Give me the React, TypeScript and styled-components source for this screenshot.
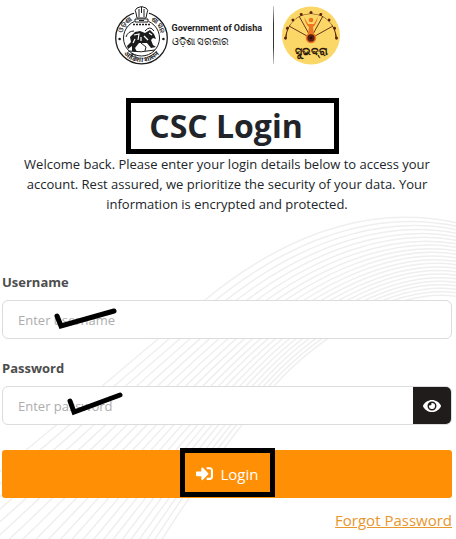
import React from "react";
import styled, { createGlobalStyle } from "styled-components";
import { FaEye, FaSignInAlt } from "react-icons/fa";

const GlobalStyle = createGlobalStyle`
  *, *::before, *::after { box-sizing: border-box; }
  body { margin: 0; background: #fff; color: #212529; font-family: "Open Sans", "Noto Sans", sans-serif; }
`;

const Page = styled.main`
  position: relative;
  isolation: isolate;
  min-height: 100vh;
  overflow: hidden;
  padding: 4px 4px 8px 2px;
`;

const Waves = styled.svg`
  position: absolute;
  z-index: -1;
  top: 0;
  right: 0;
`;

const Brand = styled.header`
  display: flex;
  justify-content: center;
  align-items: center;
  height: 62px;
`;

const BrandText = styled.div`
  min-width: 94px;
  margin-left: 3px;
  font: 500 10px/13px Roboto, sans-serif;
  color: #222;
  white-space: nowrap;
`;

const BrandName = styled.div`
  font-size: 9px;
  font-weight: 700;
`;

const Divider = styled.span`
  width: 1px;
  height: 58px;
  margin: 0 7px;
  background: linear-gradient(#ccc, #333 30%, #333 70%, #ccc);
`;

const Intro = styled.section`
  display: flex;
  flex-direction: column;
  align-items: center;
  margin-top: 32px;
  text-align: center;
`;

const Title = styled.h1`
  margin: 0 0 0 10px;
  width: 213px;
  padding-right: 12px;
  border: 5px solid #000;
  font-size: 32px;
  line-height: 46px;
  font-weight: 700;
`;

const Lead = styled.p`
  margin: 0;
  padding: 0 16px;
  font-size: 13px;
  line-height: 20px;
`;

const Form = styled.form`
  display: flex;
  flex-direction: column;
  margin-top: 58px;
`;

const Field = styled.div`
  display: flex;
  flex-direction: column;
  gap: 8px;
  margin-bottom: 19px;
`;

const Label = styled.label`
  font-size: 13px;
  line-height: 20px;
  font-weight: 700;
  color: #4d4d4d;
`;

const InputGroup = styled.div`
  position: relative;
  display: flex;
  height: 39px;
  border: 1px solid #dcdcdc;
  border-radius: 6px;
  background: #fff;
  overflow: hidden;
`;

const Input = styled.input`
  flex: 1;
  min-width: 0;
  padding: 0 15px;
  border: 0;
  outline: 0;
  background: transparent;
  font: 13px "Open Sans", sans-serif;
  &::placeholder { color: #adadad; opacity: 1; }
`;

const RevealButton = styled.button`
  display: grid;
  place-items: center;
  width: 38px;
  padding: 0;
  border: 0;
  background: #1f1c1b;
  color: #fff;
`;

const Tick = styled.svg<{ $left: number }>`
  position: absolute;
  left: ${(p) => p.$left}px;
  top: 5px;
  pointer-events: none;
`;

const LoginButton = styled.button`
  display: flex;
  justify-content: center;
  align-items: flex-start;
  height: 48px;
  margin-top: 6px;
  padding: 0;
  border: 0;
  border-radius: 3px;
  background: #ff9006;
  color: #fff;
  font: 15px "Open Sans", sans-serif;
`;

const Marked = styled.span`
  display: flex;
  justify-content: center;
  align-items: center;
  gap: 8px;
  width: 95px;
  height: 49px;
  margin-top: -2px;
  padding-top: 2px;
  border: 5px solid #000;
`;

const Forgot = styled.a`
  align-self: flex-end;
  margin-top: 12px;
  font-size: 15px;
  line-height: 20px;
  color: #e8962e;
  text-decoration: underline;
`;

const outer = [[-60, 520], [60, 425], [100, 386], [205, 300], [300, 236], [400, 207], [470, 226]];
const inner = [[140, 575], [185, 500], [235, 430], [275, 385], [325, 338], [400, 280], [470, 299]];
const COUNT = 22;
const waves = Array.from({ length: COUNT }, (_, i) => {
  const t = i / (COUNT - 1);
  const p = outer.map(([x, y], k) => {
    const u = k < 4 ? t + 0.3 * t * (1 - t) : t;
    return [x + (inner[k][0] - x) * u, y + (inner[k][1] - y) * u].join(" ");
  });
  return `M${p[0]} C${p[1]} ${p[2]} ${p[3]} S${p[5]} ${p[6]}`;
});

function OdishaEmblem() {
  return (
    <svg width="55" height="62" viewBox="0 0 55 62" fill="none" stroke="#1c1c1c" role="img" aria-label="Odisha emblem">
      <defs>
        <path id="ringTop" d="M7.5 34 A20 20 0 0 1 47.5 34" />
        <path id="ringBottom" d="M3.5 34 A24 24 0 0 0 51.5 34" />
      </defs>
      <circle cx="27.5" cy="34" r="25.8" strokeWidth="1.3" />
      <circle cx="27.5" cy="34" r="18" strokeWidth="1" />
      <g fill="#1c1c1c" stroke="none" fontFamily="Noto Sans, sans-serif" fontSize="7" fontWeight="700">
        <text><textPath href="#ringTop" startOffset="5">ଓଡ଼ିଶା</textPath></text>
        <text><textPath href="#ringTop" startOffset="41">ଶାସନ</textPath></text>
        <text><textPath href="#ringBottom" startOffset="50%" textAnchor="middle">ओडिशा शासन</textPath></text>
        <circle cx="5.6" cy="35" r="1.3" />
        <circle cx="49.4" cy="35" r="1.3" />
      </g>
      <path d="M20 20 L21 15 L20 9 Q20 4 24 4 Q27.5 0 31 4 Q35 4 35 9 L34 15 L35 20Z" fill="#fff" stroke="none" />
      <path d="M22 9 Q20 6 23 4 Q27.5 1 32 4 Q35 6 33 9 L32 14 H23Z M25 5 V13 M30 5 V13 M27.5 3 V9 M21 15 H34 V18 H21Z M25 16.5 H30" />
      <path d="M19 20.5 H36" strokeWidth="1.5" strokeDasharray="2 1" />
      <path d="M13 42 L17 38 L16 33 L21 28 L26 27 L31 29 L36 26 L40 30 L42 35 L39 34 L37 36 L39 41 L42 43 L37 44 L33 39 L25 39 L21 44 L23 48 L18 47 L18 42 L14 45Z" fill="#1c1c1c" stroke="none" />
      <path d="M20 31 L25 30 L24 36 M30 32 L34 36 M35 29 L38 31 M21 35 L19 39 M27 33 L27 37" stroke="#fff" strokeWidth="1.2" />
      <path d="M12 33 Q14 27 20 27 M27 39 L32 43 L31 47 M14 47 Q27 49 41 46 M31 27 Q36 21 40 27" />
    </svg>
  );
}

const knobAngles = [0, 22.5, 45, 67.5, 90, 112.5, 135, 157.5, 180];

function SubhadraLogo() {
  return (
    <svg width="60" height="62" viewBox="0 0 60 62" role="img" aria-label="Subhadra">
      <circle cx="30" cy="31.5" r="29" fill="#fbd767" />
      <path d="M4 36 A26 26 0 0 1 56 36 L54.5 34 A24.5 24.5 0 0 0 5.5 34Z" fill="#5a2410" />
      <g fill="#5a2410">
        {knobAngles.map((a) => (
          <circle key={a} cx="4.5" cy="34" r="1.5" transform={`rotate(${a} 30 34)`} />
        ))}
      </g>
      <path d="M8 22 L26 32 M52 22 L34 32 M18 12 L28 30 M42 12 L32 30" stroke="#5a2410" strokeWidth="0.9" />
      <path d="M23 13 Q25 21 28 23 L27 31 H33 L32 23 Q35 21 37 13 L33 20 H27Z" fill="#ed7623" />
      <circle cx="30" cy="16" r="2.3" fill="#ed7623" />
      <circle cx="30" cy="34" r="4.5" fill="#5a1e12" stroke="#ed7623" strokeWidth="1.6" />
      <circle cx="30" cy="34" r="1.3" fill="#2c0e08" />
      <text x="30" y="51" textAnchor="middle" fontSize="11" fontWeight="600" fill="#2c1608">ସୁଭଦ୍ରା</text>
    </svg>
  );
}

export default function App() {
  return (
    <Page>
      <GlobalStyle />
      <Waves width="456" height="539" fill="none" stroke="#efefef" strokeWidth="1.5" aria-hidden="true">
        {waves.map((d) => <path key={d} d={d} />)}
      </Waves>
      <Brand>
        <OdishaEmblem />
        <BrandText>
          <BrandName>Government of Odisha</BrandName>
          <div>ଓଡ଼ିଶା ସରକାର</div>
        </BrandText>
        <Divider />
        <SubhadraLogo />
      </Brand>
      <Intro>
        <Title>CSC Login</Title>
        <Lead>
          Welcome back. Please enter your login details below to access your account. Rest assured, we
          prioritize the security of your data. Your information is encrypted and protected.
        </Lead>
      </Intro>
      <Form onSubmit={(e) => e.preventDefault()}>
        <Field>
          <Label htmlFor="username">Username</Label>
          <InputGroup>
            <Input id="username" placeholder="Enter username" />
            <Tick $left={50} width="66" height="26" fill="none" stroke="#000" strokeWidth="5" strokeLinecap="round"><path d="M4 10 L8 20 L61 5" /></Tick>
          </InputGroup>
        </Field>
        <Field>
          <Label htmlFor="password">Password</Label>
          <InputGroup>
            <Input id="password" type="password" placeholder="Enter password" />
            <Tick $left={63} width="60" height="28" fill="none" stroke="#000" strokeWidth="5" strokeLinecap="round"><path d="M4 9 L8 20 L54 3" /></Tick>
            <RevealButton type="button" aria-label="Show password"><FaEye size={18} /></RevealButton>
          </InputGroup>
        </Field>
        <LoginButton type="submit"><Marked><FaSignInAlt size={17} />Login</Marked></LoginButton>
        <Forgot href="#forgot">Forgot Password</Forgot>
      </Form>
    </Page>
  );
}
